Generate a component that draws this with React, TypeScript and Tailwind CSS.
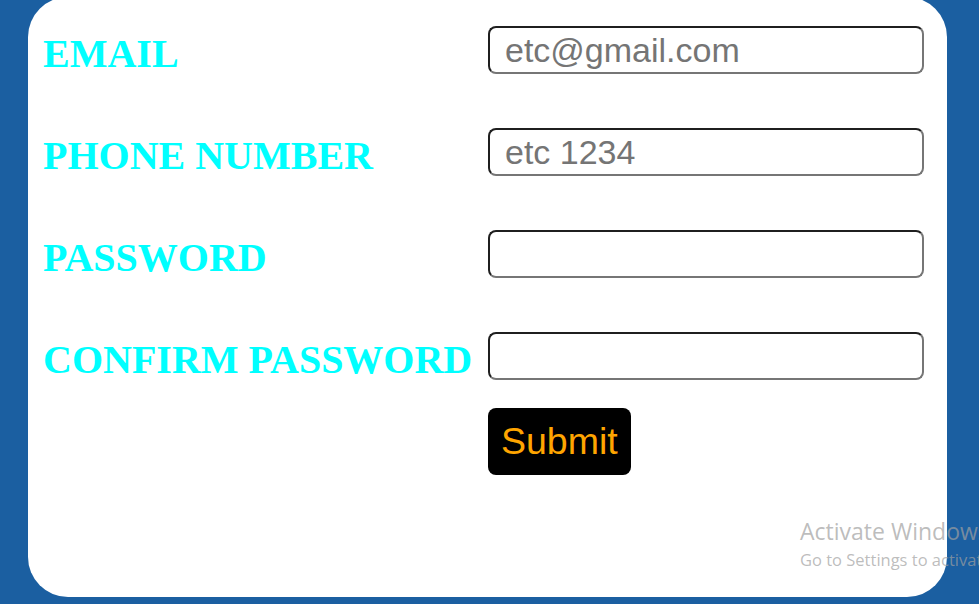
export default function App() {
  const rows = [
    { label: "EMAIL", placeholder: "etc@gmail.com", type: "email" },
    { label: "PHONE NUMBER", placeholder: "etc 1234", type: "tel" },
    { label: "PASSWORD", placeholder: "", type: "password" },
    { label: "CONFIRM PASSWORD", placeholder: "", type: "password" },
  ];

  return (
    <div className="relative h-[604px] w-full overflow-hidden bg-[#1b5fa1]">
      <form className="ml-[28px] mt-[-3px] h-[600px] w-[919px] rounded-[40px] bg-white pl-[15px] pt-[29px]">
        <div className="grid grid-cols-[445px_436px] items-center gap-y-[54px]">
          {rows.map((r) => (
            <div key={r.label} className="contents">
              <label className="mt-[8px] h-[40px] font-['Liberation_Serif',serif] text-[40px] font-bold leading-[40px] whitespace-nowrap text-[#00ffff]">
                {r.label}
              </label>
              <input
                type={r.type}
                placeholder={r.placeholder}
                className="h-[48px] w-[436px] rounded-lg border-2 border-t-[#1f1f1f] border-l-[#1f1f1f] border-b-[#767676] border-r-[#767676] bg-white px-[15px] font-['Liberation_Sans',sans-serif] text-[34px] text-black outline-none placeholder:text-[#757575]"
              />
            </div>
          ))}
        </div>
        <div className="ml-[445px] mt-[28px]">
          <button
            type="submit"
            className="h-[67px] rounded-lg bg-black px-[13px] font-['Liberation_Sans',sans-serif] text-[37.5px] text-[#ffa500]"
          >
            Submit
          </button>
        </div>
      </form>

      {/* windows watermark */}
      <div className="pointer-events-none absolute left-[800px] top-[515px] whitespace-nowrap font-['Open_Sans',sans-serif] text-[rgba(160,160,160,0.7)]">
        <div className="text-[23px] leading-[32px]">Activate Windows</div>
        <div className="text-[16.5px] leading-[26px]">Go to Settings to activate Windows.</div>
      </div>
    </div>
  );
}
